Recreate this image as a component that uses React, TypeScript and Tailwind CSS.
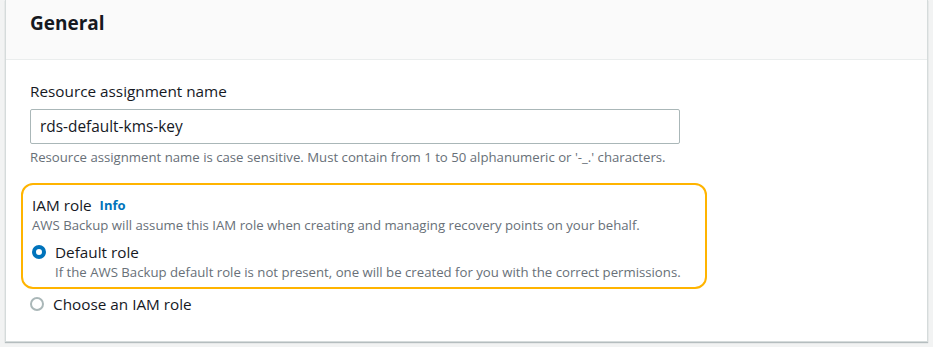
import React from "react";

export default function App() {
  const font = { fontFamily: '"Open Sans", "Liberation Sans", sans-serif' };
  return (
    <div className="w-[933px] h-[347px] bg-[#f2f3f3] px-[5px] pb-[5px] overflow-hidden" style={font}>
      <div className="h-[342px] bg-white border-x border-b border-[#d5dbdb] shadow-[0_1px_1px_rgba(0,28,36,0.25)] flex flex-col">
        <div className="h-[60px] bg-[#fafafa] border-b border-[#eaeded] pl-[24px] flex items-start pt-[7px]">
          <h2 className="text-[19px] font-bold text-[#16191f] leading-[32px]">General</h2>
        </div>
        <div className="pl-[24px] pt-[20px] flex flex-col">
          <label className="text-[15.3px] text-[#16191f] leading-[22px]">Resource assignment name</label>
          <div className="mt-[7px] w-[650px] h-[35px] border border-[#aab7b8] rounded-[2px] flex items-center pl-[9px] text-[15.4px] text-[#16191f]">
            rds-default-kms-key
          </div>
          <p className="mt-[4px] text-[13.2px] leading-[18px] text-[#687078]">
            Resource assignment name is case sensitive. Must contain from 1 to 50 alphanumeric or '-_.' characters.
          </p>
          <div className="mt-[17px] -ml-[9px] w-[686px] border-2 border-[#ffb400] rounded-[12px] pl-[9px] pt-[9px] pb-[6px]">
            <div className="flex items-center gap-[8px] leading-[22px]">
              <span className="text-[15.3px] text-[#16191f]">IAM role</span>
              <span className="text-[13px] font-bold text-[#0073bb]">Info</span>
            </div>
            <p className="text-[13.2px] leading-[18px] text-[#687078]">
              AWS Backup will assume this IAM role when creating and managing recovery points on your behalf.
            </p>
            <div className="mt-[7px] flex items-start gap-[9px]">
              <span className="mt-[4px] w-[14px] h-[14px] rounded-full border-[4px] border-[#0073bb] bg-white shrink-0" />
              <div>
                <div className="text-[15.3px] leading-[22px] text-[#16191f]">Default role</div>
                <div className="text-[13.2px] leading-[18px] text-[#687078]">
                  If the AWS Backup default role is not present, one will be created for you with the correct permissions.
                </div>
              </div>
            </div>
          </div>
          <div className="mt-[4px] flex items-center gap-[9px]">
            <span className="w-[14px] h-[14px] rounded-full border-[2px] border-[#aab7b8] bg-white shrink-0" />
            <span className="text-[15.3px] leading-[22px] text-[#16191f]">Choose an IAM role</span>
          </div>
        </div>
      </div>
    </div>
  );
}
